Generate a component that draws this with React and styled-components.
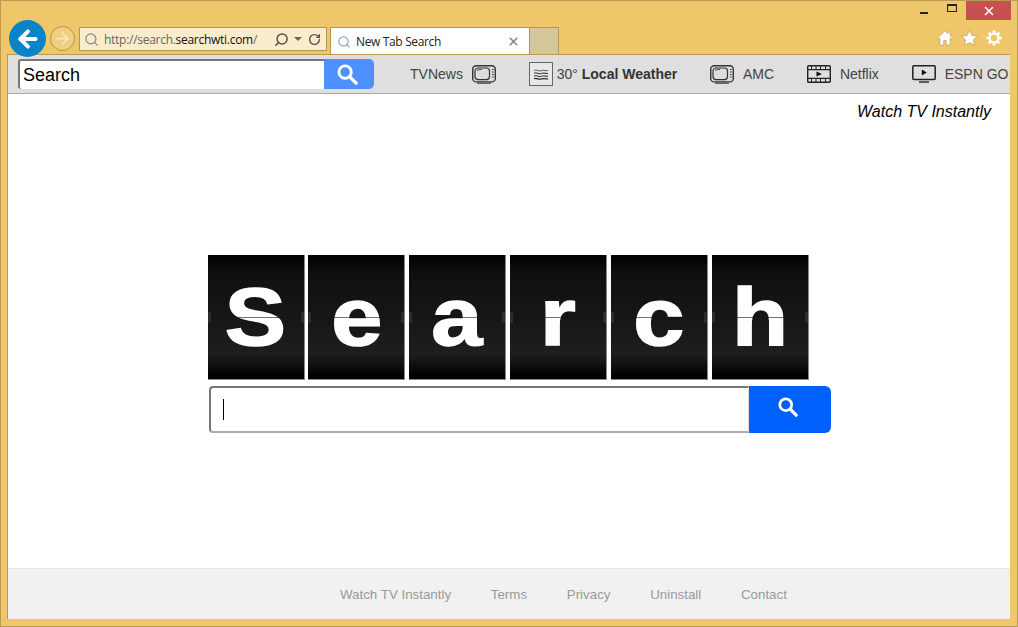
import React from "react";
import styled, { createGlobalStyle } from "styled-components";
import { ArrowLeft, ArrowRight, RotateCw, Search as SearchIcon, X } from "lucide-react";

const GlobalStyle = createGlobalStyle`
  html, body { margin: 0; padding: 0; background: #efc669; }
  * { box-sizing: border-box; }
`;

function TvIcon() {
  return (
    <svg width="24" height="19" viewBox="0 0 24 19" fill="none" stroke="#333" strokeWidth="1.2">
      <rect x="0.7" y="0.7" width="22.6" height="16.2" rx="3.5" fill="#ddd" strokeWidth="1.4" />
      <rect x="3" y="3" width="14.5" height="11.6" rx="3" />
      <path d="M5 5.500c1-.8 3-1 5-1" strokeWidth="0.9" />
      <path d="M20 4.500h1.600M20 7h1.600M20 9.500h1.600M20 12h1.600" strokeWidth="1.1" />
      <path d="M5 18.200h14" strokeWidth="1" />
    </svg>
  );
}

function FilmIcon() {
  return (
    <svg width="24" height="18" viewBox="0 0 24 18" fill="none" stroke="#222" strokeWidth="1.4">
      <rect x="0.7" y="0.7" width="22.6" height="16.6" rx="1" />
      <path d="M1 4.600h22M1 13.400h22" />
      <path d="M4.500 1v3.400M9 1v3.400M13.500 1v3.400M18.500 1v3.400M4.500 13.400v3.600M9 13.400v3.600M13.500 13.400v3.600M18.500 13.400v3.600" strokeWidth="1" />
      <path d="M9.500 6.400l5.500 2.600-5.500 2.600z" fill="#111" stroke="none" />
    </svg>
  );
}

function ScreenIcon() {
  return (
    <svg width="24" height="18" viewBox="0 0 24 18" fill="none" stroke="#222" strokeWidth="1.5">
      <rect x="0.8" y="0.8" width="22.4" height="13.6" rx="1" />
      <path d="M9.800 4.600l5 3-5 3z" fill="#111" stroke="none" />
      <path d="M7 17h10" strokeWidth="1.4" />
    </svg>
  );
}

function WeatherIcon() {
  const wave = "c2-1 3.500 0 5 .4 2 .4 3-.9 5-.6 1.500.2 2.500.6 4 .2";
  return (
    <svg width="16" height="11" viewBox="0 0 16 11" fill="none" stroke="#222" strokeWidth="1">
      <path d={`M1 1.500${wave}`} strokeWidth="0.7" />
      <path d={`M1 4.300${wave}`} />
      <path d={`M1 7.100${wave}`} />
      <path d={`M1 9.800${wave}`} strokeWidth="1.200" />
    </svg>
  );
}

function Magnifier({ size }) {
  return (
    <svg width={size} height={size} viewBox="0 0 22 22" fill="none" stroke="#fff">
      <circle cx="8.500" cy="8.500" r="6.500" strokeWidth="3" />
      <path d="M13.500 13.500L20 20" strokeWidth="3.600" strokeLinecap="round" />
    </svg>
  );
}

function HomeIcon() {
  return (
    <svg width="16" height="16" viewBox="0 0 16 16" fill="#fff" stroke="#a98d45" strokeWidth="0.5">
      <path d="M8 .8L.5 8l1.200 1.100L3 7.900V15h3.700v-4.500h2.600V15H13V7.900l1.300 1.200L15.500 8 13 5.600V2h-2v1.700z" />
    </svg>
  );
}

function StarIcon() {
  return (
    <svg width="17" height="16" viewBox="0 0 17 16" fill="#fff" stroke="#a98d45" strokeWidth="0.5">
      <path d="M8.500.6l2.400 5 5.500.6-4.100 3.700 1.200 5.400-5-2.800-5 2.800 1.200-5.400L.6 6.200l5.500-.6z" />
    </svg>
  );
}

function GearIcon() {
  const teeth = [0, 45, 90, 135];
  return (
    <svg width="16" height="16" viewBox="0 0 17 17" fill="none">
      {teeth.map((angle) => (
        <rect key={angle} x="7" y="0.6" width="3" height="15.800" fill="#fff" transform={`rotate(${angle} 8.500 8.500)`} />
      ))}
      <circle cx="8.500" cy="8.500" r="4.700" fill="#efc669" stroke="#fff" strokeWidth="2.400" />
    </svg>
  );
}

const LETTERS = ["S", "e", "a", "r", "c", "h"];
const FOOTER_LINKS = ["Watch TV Instantly", "Terms", "Privacy", "Uninstall", "Contact"];

export default function App() {
  return (
    <Window>
      <GlobalStyle />
      <TitleBar>
        <WindowButton aria-label="minimize"><MinimizeGlyph /></WindowButton>
        <WindowButton aria-label="maximize"><MaximizeGlyph /></WindowButton>
        <CloseButton aria-label="close"><X size={14} strokeWidth={2.5} /></CloseButton>
      </TitleBar>
      <NavBar>
        <BackButton><ArrowLeft size={26} strokeWidth={3.6} /></BackButton>
        <ForwardButton><ArrowRight size={19} strokeWidth={1.8} /></ForwardButton>
        <AddressBar>
          <SearchIcon size={15} color="#7f8a8c" strokeWidth={2} />
          <Url>http://search.<b>searchwti.com</b>/</Url>
          <AddressTools>
            <MirroredSearch><SearchIcon size={15} color="#555" strokeWidth={2.4} /></MirroredSearch>
            <Caret />
            <RotateCw size={13} color="#555" strokeWidth={2.6} />
          </AddressTools>
        </AddressBar>
        <Tab>
          <SearchIcon size={14} color="#7d99ad" strokeWidth={1.8} />
          <TabTitle>New Tab Search</TabTitle>
          <X size={13} color="#888" strokeWidth={3} />
        </Tab>
        <NewTab />
        <ChromeIcons>
          <HomeIcon />
          <StarIcon />
          <GearIcon />
        </ChromeIcons>
      </NavBar>
      <Page>
        <Toolbar>
          <ToolbarSearch>
            <ToolbarInput>Search</ToolbarInput>
            <ToolbarButton><Magnifier size={21} /></ToolbarButton>
          </ToolbarSearch>
          <ToolbarLinks>
            <ToolbarLink>TVNews <TvIcon /></ToolbarLink>
            <ToolbarLink $tight>
              <WeatherBox><WeatherIcon /></WeatherBox>
              <span>30° <b>Local Weather</b></span>
            </ToolbarLink>
            <ToolbarLink><TvIcon /> AMC</ToolbarLink>
            <ToolbarLink><FilmIcon /> Netflix</ToolbarLink>
            <ToolbarLink><ScreenIcon /> ESPN GO</ToolbarLink>
          </ToolbarLinks>
        </Toolbar>
        <Main>
          <Tagline>Watch TV Instantly</Tagline>
          <Center>
            <Board>
              {LETTERS.map((letter) => (
                <Tile key={letter}>
                  <Letter>{letter}</Letter>
                  <Hinge />
                </Tile>
              ))}
            </Board>
            <MainSearch>
              <MainInput><TextCursor /></MainInput>
              <MainButton><Magnifier size={20} /></MainButton>
            </MainSearch>
          </Center>
        </Main>
        <Footer>
          {FOOTER_LINKS.map((link) => (
            <FooterLink key={link}>{link}</FooterLink>
          ))}
        </Footer>
      </Page>
    </Window>
  );
}

const Window = styled.div`
  display: flex;
  flex-direction: column;
  width: 1018px;
  height: 627px;
  overflow: hidden;
  border: 1px solid #b99b52;
  background: #efc669;
`;

const TitleBar = styled.div`
  display: flex;
  justify-content: flex-end;
  align-items: flex-start;
  height: 19px;
  padding-right: 6px;
`;

const WindowButton = styled.div`
  display: flex;
  align-items: center;
  justify-content: center;
  width: 26px;
  height: 19px;
  color: #222;
`;

const MinimizeGlyph = styled.span`
  display: block;
  width: 8px;
  height: 2px;
  margin-top: 5px;
  margin-right: 6px;
  background: #222;
`;

const MaximizeGlyph = styled.span`
  display: block;
  width: 10px;
  height: 8px;
  margin-top: -5px;
  margin-right: 2px;
  border: 1px solid #222;
  border-top-width: 2px;
`;

const CloseButton = styled.div`
  display: flex;
  align-items: center;
  justify-content: center;
  width: 45px;
  height: 19px;
  background: #c75050;
  color: #fff;
`;

const NavBar = styled.div`
  display: flex;
  align-items: flex-end;
  height: 34px;
  padding-left: 8px;
`;

const BackButton = styled.div`
  position: relative;
  z-index: 1;
  display: flex;
  align-items: center;
  justify-content: center;
  flex: none;
  width: 37px;
  height: 37px;
  margin-bottom: -3px;
  border-radius: 50%;
  background: #0a84c6;
  color: #fff;
`;

const ForwardButton = styled.div`
  display: flex;
  align-items: center;
  justify-content: center;
  flex: none;
  width: 25px;
  height: 25px;
  margin: 0 4px 3px 4px;
  border: 1px solid #b3964f;
  border-radius: 50%;
  background: #f1cf80;
  color: #f9e9c4;
`;

const AddressBar = styled.div`
  display: flex;
  align-items: center;
  flex: none;
  width: 248px;
  height: 24px;
  margin-bottom: 3px;
  padding: 0 5px 0 4px;
  border: 1px solid #b3964f;
  background: #fbeccb;
`;

const Url = styled.span`
  margin-left: 5px;
  font: 12px "Open Sans", sans-serif;
  letter-spacing: -0.28px;
  color: #666;
  white-space: nowrap;

  b {
    font-weight: 400;
    color: #111;
  }
`;

const AddressTools = styled.div`
  display: flex;
  align-items: center;
  margin-left: auto;
`;

const MirroredSearch = styled.span`
  display: flex;
  transform: scaleX(-1);
`;

const Caret = styled.span`
  width: 0;
  height: 0;
  margin: 0 6px 0 5px;
  border: 4px solid transparent;
  border-top-color: #666;
  border-bottom-width: 0;
`;

const Tab = styled.div`
  display: flex;
  align-items: center;
  flex: none;
  width: 200px;
  height: 27px;
  margin-left: 3px;
  padding: 1px 9px 0 6px;
  border: 1px solid #b3964f;
  border-bottom: 0;
  background: #fff;
`;

const TabTitle = styled.span`
  flex: 1;
  margin-left: 5px;
  font: 12px "Open Sans", sans-serif;
  letter-spacing: -0.35px;
  color: #222;
`;

const NewTab = styled.div`
  flex: none;
  width: 29px;
  height: 27px;
  border: 1px solid #b3964f;
  border-width: 1px 1px 0 0;
  background: #d6c69c;
`;

const ChromeIcons = styled.div`
  display: flex;
  align-items: center;
  gap: 8px;
  margin: 0 15px 8px auto;
`;

const Page = styled.div`
  display: flex;
  flex-direction: column;
  flex: 1;
  margin: 0 7px 7px 6px;
  border: 1px solid #b99b52;
  border-width: 1px 0 0 1px;
  background: #fff;
`;

const Toolbar = styled.div`
  display: flex;
  align-items: center;
  height: 39px;
  padding-left: 10px;
  overflow: hidden;
  border-bottom: 1px solid #aaa;
  background: #dfdfdf;
`;

const ToolbarSearch = styled.div`
  display: flex;
  flex: none;
  height: 30px;
`;

const ToolbarInput = styled.div`
  display: flex;
  align-items: center;
  width: 306px;
  padding-left: 3px;
  border: 2px solid #777;
  border-width: 2px 0 0 2px;
  border-radius: 3px 0 0 3px;
  background: #fff;
  font: 18px "Liberation Sans", Arial, sans-serif;
  color: #000;
`;

const ToolbarButton = styled.div`
  display: flex;
  align-items: center;
  justify-content: center;
  width: 50px;
  padding-right: 4px;
  border-radius: 0 5px 5px 0;
  background: #4d90fe;
`;

const ToolbarLinks = styled.div`
  display: flex;
  align-items: center;
  gap: 32.8px;
  margin-left: 36px;
`;

const ToolbarLink = styled.div`
  display: flex;
  align-items: center;
  flex: none;
  gap: ${({ $tight }) => ($tight ? "4px" : "9px")};
  font: 14px "Liberation Sans", Arial, sans-serif;
  color: #444;
  white-space: nowrap;

  b {
    color: #333;
  }
`;

const WeatherBox = styled.div`
  display: flex;
  align-items: center;
  justify-content: center;
  width: 24px;
  height: 24px;
  border: 1px solid #666;
  background: #e8e8e8;
`;

const Main = styled.div`
  display: flex;
  flex-direction: column;
  flex: 1;
`;

const Tagline = styled.div`
  align-self: flex-end;
  margin: 8px 19px 0 0;
  font: italic 16px "Liberation Sans", Arial, sans-serif;
  line-height: 20px;
  color: #000;
`;

const Center = styled.div`
  display: flex;
  flex-direction: column;
  margin: 133px 0 0 199.6px;
`;

const Board = styled.div`
  display: flex;
  gap: 3.8px;
`;

const Tile = styled.div`
  position: relative;
  display: flex;
  align-items: center;
  justify-content: center;
  flex: none;
  width: 97px;
  height: 125px;
  border-right: 1px solid #888;
  border-bottom: 1px solid #888;
  background: linear-gradient(#000 0%, #101010 15%, #161616 50%, #1e1e1e 80%, #000 98%);
`;

const Letter = styled.span`
  display: block;
  transform: scaleX(1.12);
  font: bold 82px/1 "Liberation Sans", Arial, sans-serif;
  color: #fff;
  -webkit-text-stroke: 1.5px #fff;
`;

const Hinge = styled.span`
  position: absolute;
  top: 62px;
  left: 0;
  right: 0;
  height: 1px;
  background: rgba(20, 20, 20, 0.6);

  &::before,
  &::after {
    content: "";
    position: absolute;
    top: -5px;
    width: 3px;
    height: 11px;
    background: #2c2c2c;
  }

  &::before {
    left: 0;
  }

  &::after {
    right: 0;
  }
`;

const MainSearch = styled.div`
  display: flex;
  height: 47px;
  margin: 6px 0 0 1.4px;
`;

const MainInput = styled.div`
  display: flex;
  align-items: center;
  width: 540px;
  padding-left: 12px;
  border: 2px solid #aaa;
  border-top-color: #777;
  border-left-color: #777;
  border-right-color: #ddd;
  border-right-width: 1px;
  border-radius: 4px 0 0 4px;
  background: #fff;
`;

const TextCursor = styled.span`
  display: block;
  width: 1px;
  height: 21px;
  background: #000;
`;

const MainButton = styled.div`
  display: flex;
  align-items: center;
  justify-content: center;
  width: 82px;
  padding: 0 4px 6px 0;
  border-radius: 0 6px 6px 0;
  background: #0060fb;
`;

const Footer = styled.div`
  display: flex;
  align-items: center;
  gap: 39.7px;
  height: 51px;
  padding-left: 332px;
  border-top: 1px solid #e4e4e4;
  background: #f1f1f1;
`;

const FooterLink = styled.span`
  font: 13.33px "Liberation Sans", Arial, sans-serif;
  color: #999;
`;
